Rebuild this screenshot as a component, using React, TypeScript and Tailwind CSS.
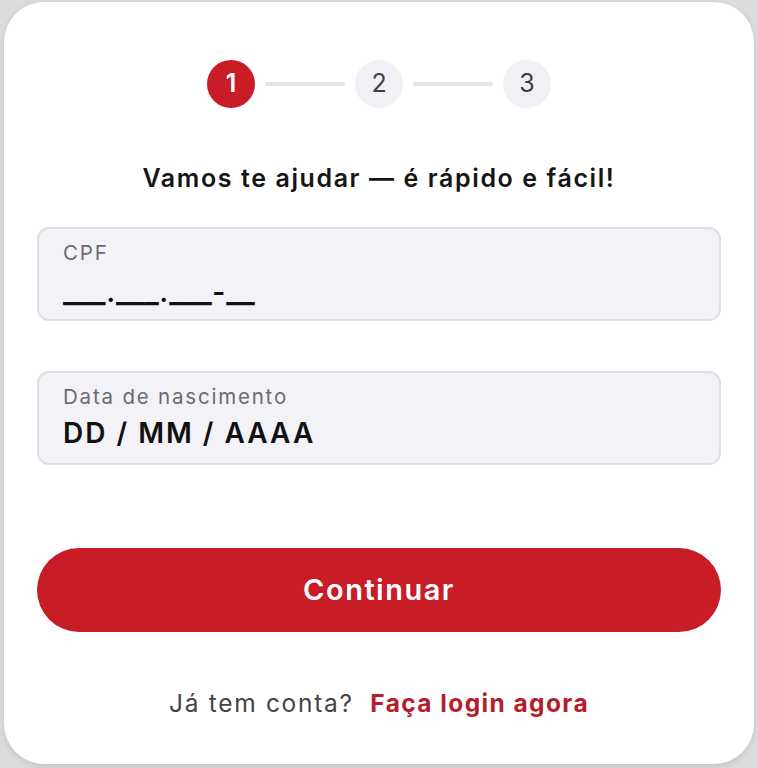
import React, { useState } from 'react';

const font = { fontFamily: 'Inter, "Noto Sans", sans-serif' };

const Step: React.FC<{ n: number; active?: boolean }> = ({ n, active }) => (
  <div
    className={`w-12 h-12 rounded-full flex items-center justify-center text-[25px] ${
      active ? 'bg-[#c81c27] text-white font-semibold' : 'bg-[#f1f0f4] text-[#3f3f46]'
    }`}
  >
    {n}
  </div>
);

// máscara do CPF: grupos de sublinhado contínuos
const CpfMask: React.FC = () => (
  <div className="mt-[6px] h-9 flex items-baseline text-[#111] font-semibold leading-9">
    <span className="text-[31px] tracking-[-0.5px]">___</span>
    <span className="text-[28px] mx-[1px]">.</span>
    <span className="text-[31px] tracking-[-0.5px]">___</span>
    <span className="text-[28px] mx-[1px]">.</span>
    <span className="text-[31px] tracking-[-0.5px]">___</span>
    <span className="text-[28px] mx-[1px]">-</span>
    <span className="text-[31px] tracking-[-0.5px]">__</span>
  </div>
);

export default function App() {
  const [birth, setBirth] = useState('');

  return (
    <div className="min-h-screen bg-[#dcdcdc] pt-[2px] px-[4px] pb-[4px]" style={font}>
      <div className="bg-white rounded-[40px] pt-[58px] pb-[45px] px-[33px] shadow-[0_2px_6px_rgba(0,0,0,0.12)]">
        {/* passos */}
        <div className="flex items-center justify-center gap-[10px]">
          <Step n={1} active />
          <div className="w-20 h-[4px] rounded-full bg-[#e4e3e8]" />
          <Step n={2} />
          <div className="w-20 h-[4px] rounded-full bg-[#e4e3e8]" />
          <Step n={3} />
        </div>

        <h1 className="mt-[54px] text-center text-[25px] leading-8 tracking-[1.6px] font-semibold text-[#151515]">
          Vamos te ajudar — é rápido e fácil!
        </h1>

        {/* CPF */}
        <div className="mt-[33px] h-[94px] rounded-xl bg-[#f3f2f7] border-2 border-[#e0dfe5] px-[24px] pt-[10px]">
          <span className="block text-[20.5px] leading-7 tracking-[1.8px] text-[#6b6b73]">CPF</span>
          <CpfMask />
        </div>

        {/* Data */}
        <label className="mt-[50px] block h-[94px] rounded-xl bg-[#f3f2f7] border-2 border-[#e0dfe5] px-[24px] pt-[10px]">
          <span className="block text-[20.5px] leading-7 tracking-[1.8px] text-[#6b6b73]">Data de nascimento</span>
          <input
            value={birth}
            onChange={(e) => setBirth(e.target.value)}
            placeholder="DD / MM / AAAA"
            className="mt-[4px] block w-full bg-transparent outline-none text-[28px] leading-9 tracking-[2px] font-semibold text-[#111] placeholder-[#111]"
          />
        </label>

        <button className="mt-[83px] w-full h-[84px] rounded-full bg-[#c81c27] text-white text-[29px] tracking-[1.5px] font-semibold">
          Continuar
        </button>

        <p className="mt-[55px] text-center text-[24.5px] leading-8 tracking-[1.7px] text-[#444]">
          Já tem conta?{' '}
          <a href="#" className="ml-2 font-bold tracking-[1.4px] text-[#b71c2c]">
            Faça login agora
          </a>
        </p>
      </div>
    </div>
  );
}
